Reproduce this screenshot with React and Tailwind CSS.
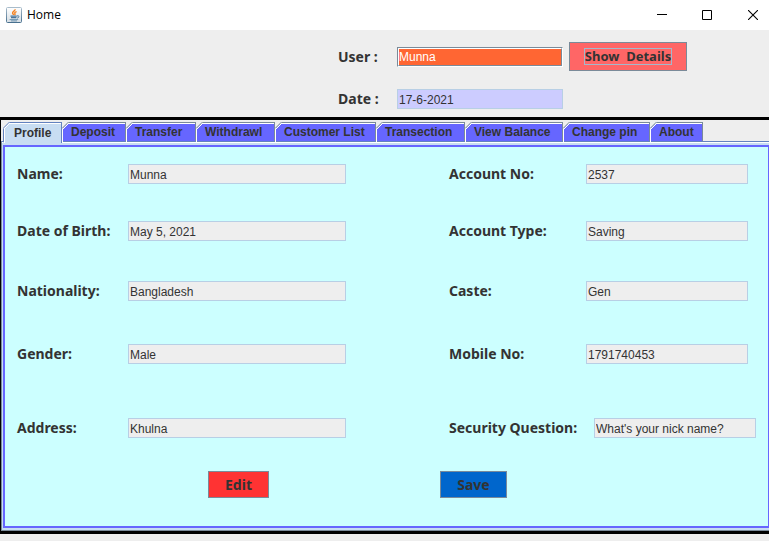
import React from "react";

const tabs = [
  { name: "Profile", width: "w-[59px]" },
  { name: "Deposit", width: "w-[64px]" },
  { name: "Transfer", width: "w-[70px]" },
  { name: "Withdrawl", width: "w-[79px]" },
  { name: "Customer List", width: "w-[101px]" },
  { name: "Transection", width: "w-[89px]" },
  { name: "View Balance", width: "w-[98px]" },
  { name: "Change pin", width: "w-[87px]" },
  { name: "About", width: "w-[53px]" },
];

const rows = [
  { gap: "", left: ["Name:", "Munna"], right: ["Account No:", "2537"] },
  { gap: "mt-[37px]", left: ["Date of Birth:", "May 5, 2021"], right: ["Account Type:", "Saving"] },
  { gap: "mt-10", left: ["Nationality:", "Bangladesh"], right: ["Caste:", "Gen"] },
  { gap: "mt-[43px]", left: ["Gender:", "Male"], right: ["Mobile No:", "1791740453"] },
  { gap: "mt-[54px]", left: ["Address:", "Khulna"], right: ["Security Question:", "What's your nick name?"], wide: true },
];

const sans = "font-['Liberation_Sans',Arial,sans-serif]";
const labelStyle = "font-['Noto_Sans',Tahoma,sans-serif] text-sm leading-5 font-bold whitespace-nowrap";

function JavaIcon() {
  return (
    <svg width="16" height="16" viewBox="0 0 16 16" fill="none" aria-hidden="true">
      <defs>
        <linearGradient id="frame" x1="0" y1="0" x2="0" y2="1">
          <stop offset="0" stopColor="#a9bccb" />
          <stop offset="1" stopColor="#48708f" />
        </linearGradient>
        <linearGradient id="face" x1="0" y1="0" x2="0" y2="1">
          <stop offset="0" stopColor="#ffffff" />
          <stop offset="1" stopColor="#d5dde3" />
        </linearGradient>
      </defs>
      <rect x="0.5" y="0.5" width="15" height="15" rx="1" fill="url(#face)" stroke="url(#frame)" />
      <path d="M9 2.2c.7 1.6-3 2.2-2.4 4 .2.7 1 .9 1 1.8M10.6 4.6c-1.4.5-2.4 1.2-1.7 2 .4.5.2 1-.4 1.4" stroke="#f58220" strokeWidth="1.4" />
      <path d="M4.5 9.1h6.3M5 10.6h5.4" stroke="#49759a" strokeWidth="1.3" />
      <path d="M11 8.9c2.6-.6 2.6 1.6.2 2.2" stroke="#49759a" strokeWidth="1" />
      <path d="M3.6 12.6h8.6M5 13.9h6" stroke="#6f94b0" strokeWidth="1" />
    </svg>
  );
}

function Field({ id, label, value, labelWidth, inputWidth }) {
  return (
    <div className="flex items-center">
      <label htmlFor={id} className={`${labelStyle} ${labelWidth} shrink-0`}>{label}</label>
      <input
        id={id}
        readOnly
        defaultValue={value}
        className={`${sans} ${inputWidth} h-5 min-w-0 border border-[#b8cfe5] bg-[#eeeeee] px-px pt-0.5 text-xs outline-none`}
      />
    </div>
  );
}

function Tab({ name, width, active }) {
  return (
    <button
      role="tab"
      aria-selected={active}
      className={`${width} ${active ? "z-10 -mb-0.5 h-[21px] border-[#6382bf] bg-[#c8ddf2] pl-[11px]" : "h-[19px] border-[#7a8a99] bg-[#6666ff] pl-[9px]"} relative shrink-0 border-t border-r text-left text-xs leading-[18px] font-bold whitespace-nowrap`}
    >
      <span className={`absolute top-0 left-0 h-[19px] w-px ${active ? "bg-[#6382bf]" : "bg-white"}`} />
      {active && <span className="absolute top-0 left-px h-full w-px bg-white" />}
      <span className="absolute top-0 right-0 left-1 h-px bg-white" />
      <svg className="absolute -top-px left-0" width="7" height="7" viewBox="0 0 7 7" aria-hidden="true">
        <path d="M0 0H7L0 7Z" fill="#eeeeee" />
        <path d="M0 6.5L6.5 0" stroke={active ? "#6382bf" : "#7a8a99"} />
        <path d="M1 7L7 1" stroke="#ffffff" />
      </svg>
      <span className="block h-[18px]">{name}</span>
    </button>
  );
}

export default function App() {
  return (
    <div className="overflow-hidden bg-[#eeeeee] text-[#333333]">
      <header className="flex h-[30px] items-center bg-white pl-1.5 text-black">
        <JavaIcon />
        <h1 className="ml-[5px] flex-1 font-['Open_Sans','Segoe_UI',sans-serif] text-xs">Home</h1>
        <div className="flex h-full">
          <button aria-label="Minimize" className="grid w-[45px] place-items-center">
            <svg width="10" height="10" stroke="#000"><path d="M0 4.5H10" /></svg>
          </button>
          <button aria-label="Maximize" className="grid w-[45px] place-items-center">
            <svg width="10" height="10" fill="none" stroke="#000"><path d="M.5 .5H9.5V9.5H.5Z" /></svg>
          </button>
          <button aria-label="Close" className="grid w-10 place-items-center pl-2">
            <svg width="10" height="10" stroke="#000" strokeWidth="1.1"><path d="M0 0L10 10M10 0L0 10" /></svg>
          </button>
        </div>
      </header>

      <section className="h-[87px] pt-3 pl-[338px]">
        <div className="flex h-[29px] items-center">
          <label htmlFor="user" className={`${labelStyle} w-[59px] shrink-0`}>User :</label>
          <div className="h-5 w-[166px] border border-t-[#7a8a99] border-r-white border-b-white border-l-[#7a8a99]">
            <input
              id="user"
              defaultValue="Munna"
              className={`${sans} block h-[18px] w-full border border-t-white border-r-[#7a8a99] border-b-[#7a8a99] border-l-white bg-[#ff6633] pt-px text-xs text-white outline-none`}
            />
          </div>
          <button className="ml-1.5 grid h-[29px] w-[118px] place-items-center border border-[#7a8a99] bg-[#ff6666]">
            <span className="border border-[#a3b8cc] font-['Noto_Sans',Tahoma,sans-serif] text-[13px] leading-[15px] font-bold whitespace-pre">Show  Details</span>
          </button>
        </div>
        <div className="mt-[18px] flex items-center">
          <label htmlFor="date" className={`${labelStyle} w-[59px] shrink-0`}>Date :</label>
          <input
            id="date"
            defaultValue="17-6-2021"
            className={`${sans} h-5 w-[166px] border border-[#b8cfe5] bg-[#ccccff] px-px pt-0.5 text-xs outline-none`}
          />
        </div>
      </section>

      <main className="border-y-[3px] border-l border-black">
        <div role="tablist" className={`${sans} flex items-start pt-0.5 pl-0.5`}>
          {tabs.map((tab, i) => (
            <Tab key={tab.name} {...tab} active={i === 0} />
          ))}
        </div>
        <div className="border-t border-b border-l border-t-[#6382bf] border-b-[#7a8a99] border-l-[#7a8a99]">
          <div className="border-t border-white bg-[#c8ddf2] pt-0.5 pb-0.5 pl-px">
            <form className="border-2 border-r border-[#6666ff] bg-[#ccffff] pt-[17px] pb-7 pl-3" onSubmit={(e) => e.preventDefault()}>
              {rows.map((row, i) => (
                <div key={row.left[0]} className={`${row.gap} grid grid-cols-[432fr_319fr]`}>
                  <Field id={`left-${i}`} label={row.left[0]} value={row.left[1]} labelWidth="w-[111px]" inputWidth="w-[218px]" />
                  <Field id={`right-${i}`} label={row.right[0]} value={row.right[1]} labelWidth={row.wide ? "w-[145px]" : "w-[137px]"} inputWidth="w-[162px]" />
                </div>
              ))}
              <div className="mt-[33px] flex gap-[171px] pl-[191px]">
                <button type="button" className={`${labelStyle} h-[27px] w-[61px] border border-[#7a8a99] bg-[#ff3333]`}>Edit</button>
                <button type="button" className={`${labelStyle} h-[27px] w-[67px] border border-[#7a8a99] bg-[#0066cc]`}>Save</button>
              </div>
            </form>
          </div>
        </div>
      </main>
      <footer className="h-[7px]" />
    </div>
  );
}
